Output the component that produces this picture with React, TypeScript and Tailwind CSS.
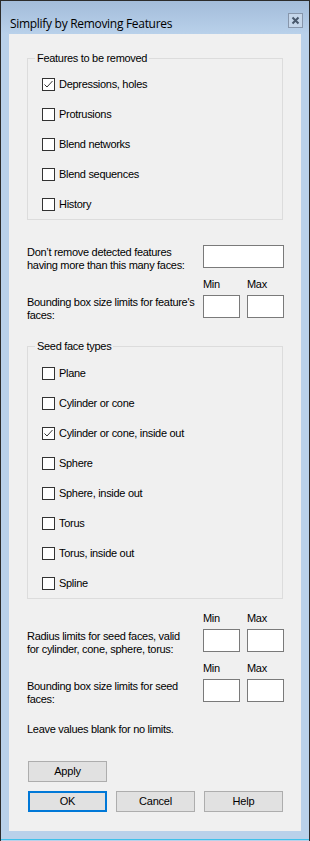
import React from "react";

const font = { fontFamily: '"Liberation Sans", Arial, sans-serif' };

function Check({ label, checked }: { label: string; checked?: boolean }) {
  return (
    <div className="flex h-[30px] items-center pl-[14px]">
      <div className="flex h-[13px] w-[13px] items-center justify-center border border-[#333333] bg-white">
        {checked && (
          <svg width="11" height="11" viewBox="0 0 11 11">
            <path d="M1.5 5.5 L4 8 L9.5 2" fill="none" stroke="#333333" strokeWidth="1" />
          </svg>
        )}
      </div>
      <span className="ml-[4px] text-[11px] leading-[14px] tracking-[-0.3px] text-black">{label}</span>
    </div>
  );
}

function Box({ w }: { w: string }) {
  return <div className={`h-[23px] border border-[#7a7a7a] bg-white ${w}`} />;
}

function MinMaxRow({ l1, l2 }: { l1: string; l2: string }) {
  return (
    <div className="flex flex-col">
      <div className="flex justify-end">
        <div className="w-[44px] text-[11px] leading-[14px] tracking-[-0.3px]">Min</div>
        <div className="w-[37px] text-[11px] leading-[14px] tracking-[-0.3px]">Max</div>
      </div>
      <div className="mt-[4px] flex items-start">
        <div className="flex-1 whitespace-nowrap pt-[1px] text-[11px] leading-[13px] tracking-[-0.3px]">
          <div>{l1}</div>
          <div>{l2}</div>
        </div>
        <div className="flex gap-[7px]">
          <Box w="w-[37px]" />
          <Box w="w-[37px]" />
        </div>
      </div>
    </div>
  );
}

function Btn({ label, primary }: { label: string; primary?: boolean }) {
  return (
    <div
      className={`flex h-[21px] w-[79px] items-center justify-center bg-[#e1e1e1] text-[11px] tracking-[-0.2px] ${
        primary ? "border-2 border-[#0078d7]" : "border border-[#adadad]"
      }`}
    >
      {label}
    </div>
  );
}

export default function App() {
  return (
    <div
      className="flex h-[841px] w-[310px] flex-col border-l border-t border-r border-[#2b2b2b] bg-[#b9d1ea]"
      style={font}
    >
      <div className="flex h-[33px] shrink-0 items-start justify-between bg-gradient-to-b from-[#a3bcda] to-[#b9d1ea] pl-[9px] pr-[6px] pt-[12px]">
        <span
          className="mt-[3px] text-[12px] leading-[16px] tracking-[-0.3px] text-black"
          style={{ fontFamily: '"Open Sans", "Noto Sans", sans-serif' }}
        >
          Simplify by Removing Features
        </span>
        <div className="flex h-[15px] w-[15px] items-center justify-center border border-[#8796ab] bg-[#c5d6ea]">
          <svg width="9" height="9" viewBox="0 0 9 9">
            <path d="M1.5 1.5 L7.5 7.5 M7.5 1.5 L1.5 7.5" stroke="#48586c" strokeWidth="2" />
          </svg>
        </div>
      </div>
      <div className="mx-[8px] flex h-[797px] shrink-0 flex-col overflow-hidden bg-[#f0f0f0] pl-[18px] pr-[17px] pt-[17px] text-black">
        <fieldset className="mr-[1px] border border-[#dcdcdc] pb-0">
          <legend className="ml-[7px] px-[2px] text-[11px] leading-[14px] tracking-[-0.3px]">Features to be removed</legend>
          <div className="pt-[4px]">
            <Check label="Depressions, holes" checked />
            <Check label="Protrusions" />
            <Check label="Blend networks" />
            <Check label="Blend sequences" />
            <Check label="History" />
          </div>
        </fieldset>

        <div className="mt-[25px] flex items-start">
          <div className="flex-1 whitespace-nowrap pt-[1px] text-[11px] leading-[13px] tracking-[-0.3px]">
            <div>Don’t remove detected features</div>
            <div>having more than this many faces:</div>
          </div>
          <Box w="w-[81px]" />
        </div>

        <div className="mt-[5px]">
          <MinMaxRow l1="Bounding box size limits for feature's" l2="faces:" />
        </div>

        <fieldset className="mr-[1px] mt-[17px] border border-[#dcdcdc] pb-0">
          <legend className="ml-[7px] px-[2px] text-[11px] leading-[14px] tracking-[-0.3px]">Seed face types</legend>
          <div className="pt-[5px]">
            <Check label="Plane" />
            <Check label="Cylinder or cone" />
            <Check label="Cylinder or cone, inside out" checked />
            <Check label="Sphere" />
            <Check label="Sphere, inside out" />
            <Check label="Torus" />
            <Check label="Torus, inside out" />
            <Check label="Spline" />
          </div>
        </fieldset>

        <div className="mt-[12px]">
          <MinMaxRow l1="Radius limits for seed faces, valid" l2="for cylinder, cone, sphere, torus:" />
        </div>
        <div className="mt-[5px]">
          <MinMaxRow l1="Bounding box size limits for seed" l2="faces:" />
        </div>

        <div className="mt-[16px] text-[11px] leading-[14px] tracking-[-0.3px]">Leave values blank for no limits.</div>

        <div className="ml-[1px] mt-[25px] flex flex-col gap-[9px]">
          <Btn label="Apply" />
          <div className="flex gap-[9px]">
            <Btn label="OK" primary />
            <Btn label="Cancel" />
            <Btn label="Help" />
          </div>
        </div>
      </div>
      <div className="h-[8px] shrink-0" />
      <div className="h-[1px] shrink-0 bg-[#3fc1ea]" />
    </div>
  );
}
